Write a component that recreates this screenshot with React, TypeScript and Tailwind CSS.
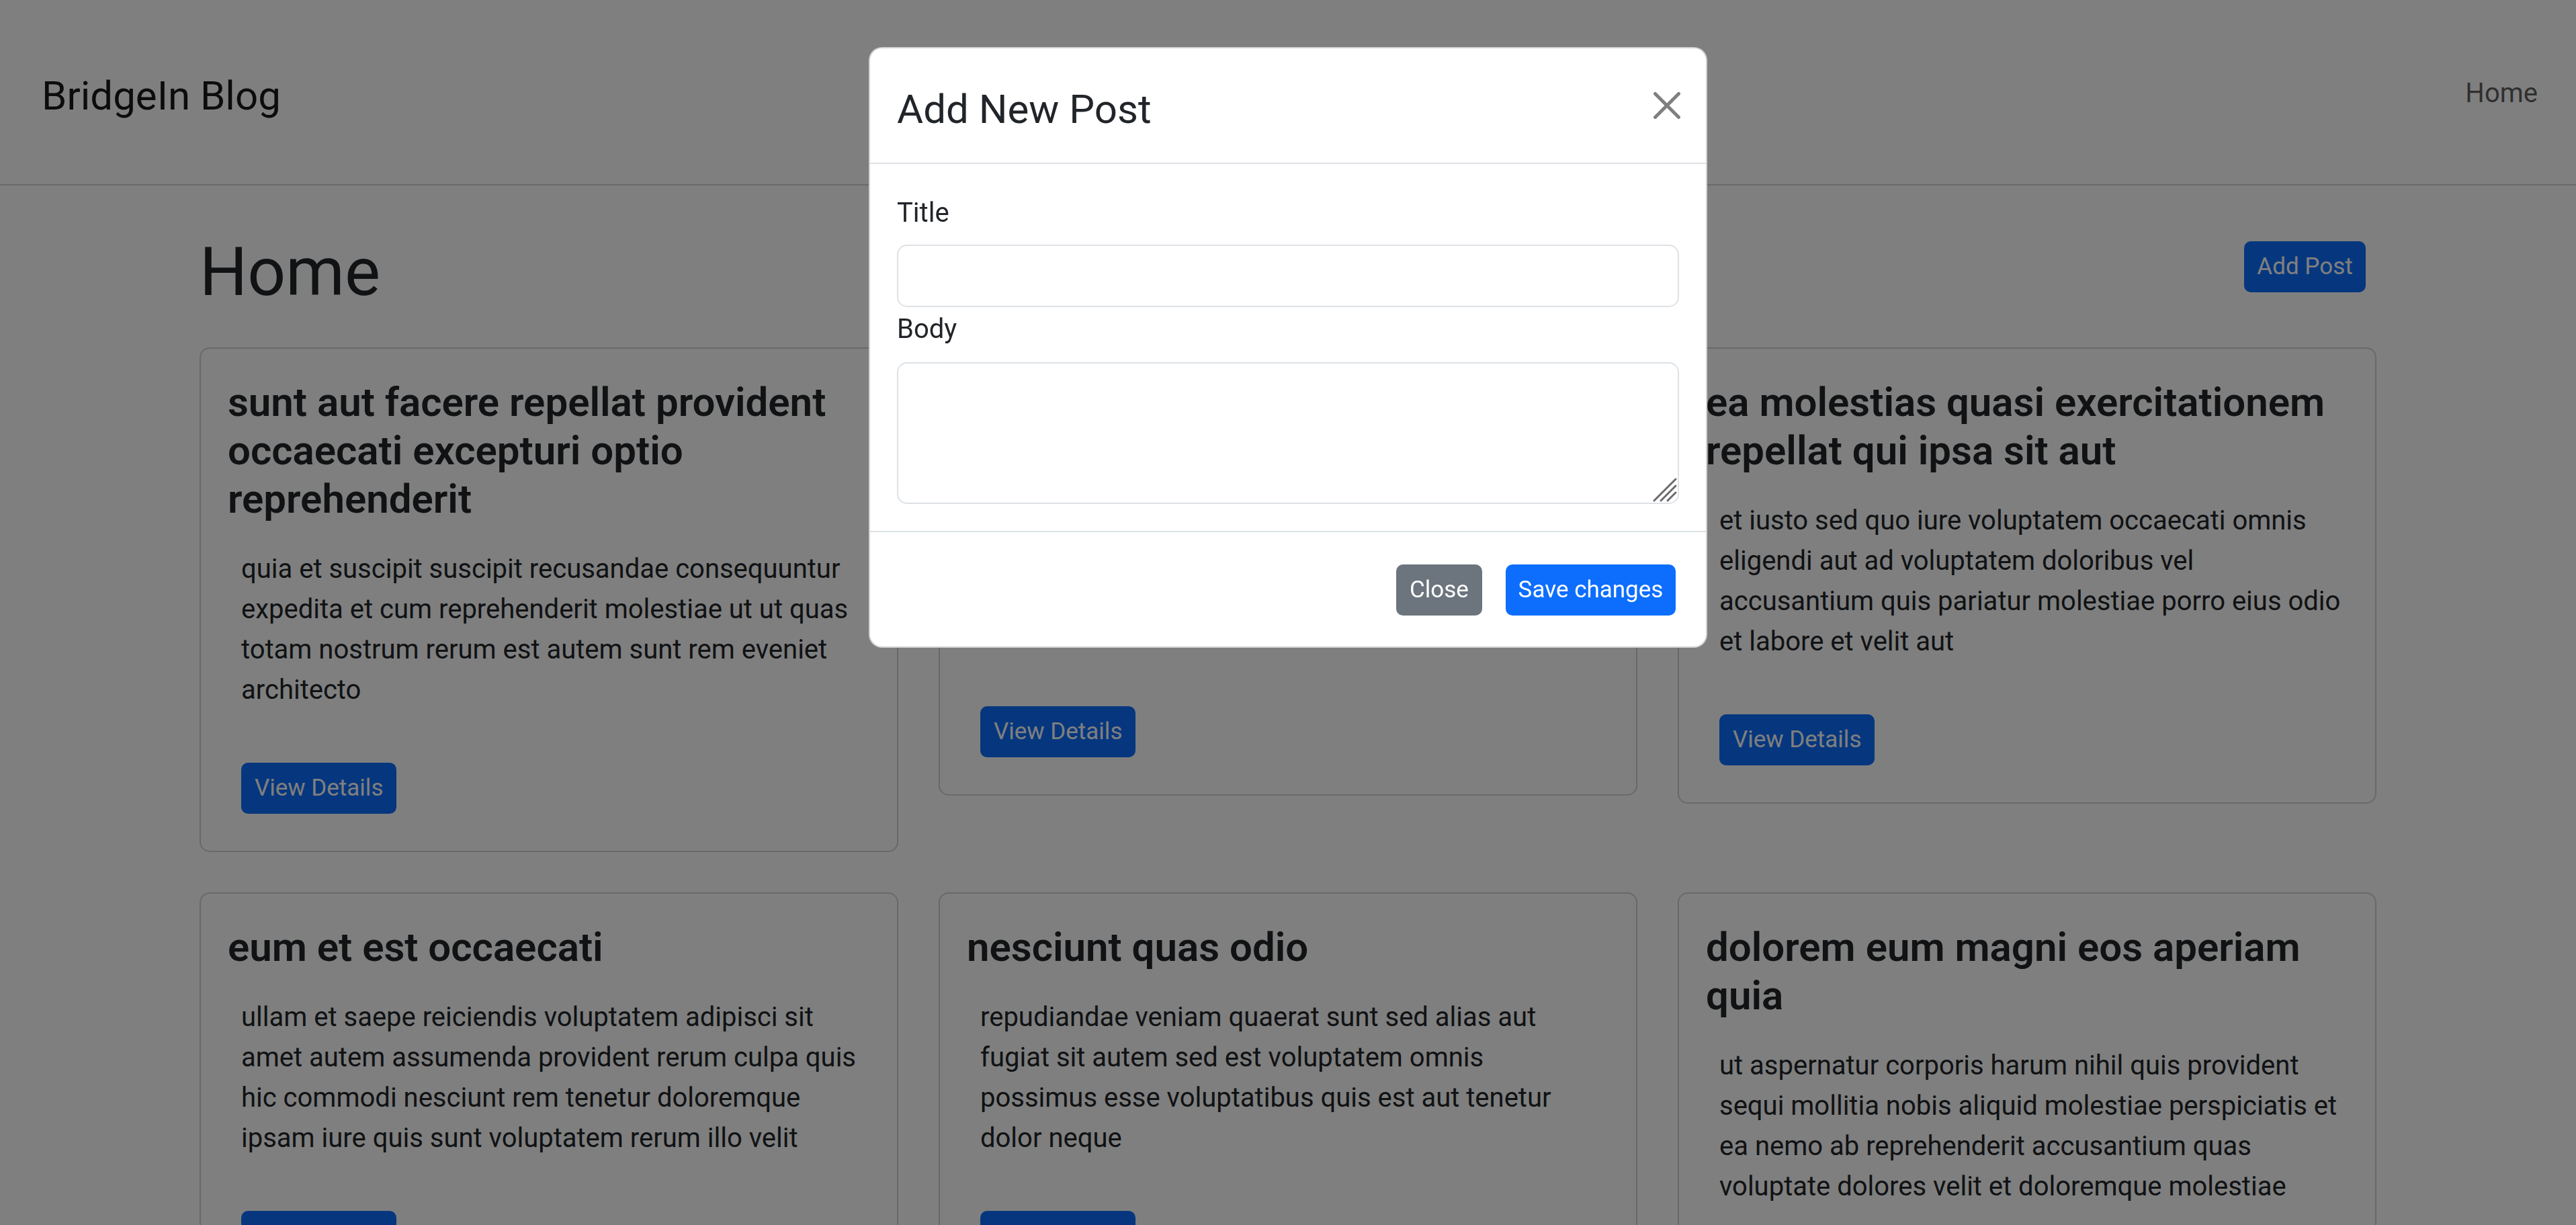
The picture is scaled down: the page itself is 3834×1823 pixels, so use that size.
import React from "react";

type Post = { title: string[]; body: string[] };

const posts: Post[] = [
  {
    title: ["sunt aut facere repellat provident", "occaecati excepturi optio", "reprehenderit"],
    body: [
      "quia et suscipit suscipit recusandae consequuntur",
      "expedita et cum reprehenderit molestiae ut ut quas",
      "totam nostrum rerum est autem sunt rem eveniet",
      "architecto",
    ],
  },
  {
    title: ["qui est esse"],
    body: [
      "est rerum tempore vitae sequi sint nihil",
      "reprehenderit dolor beatae ea dolores neque fugiat",
      "blanditiis voluptate porro vel nihil molestiae ut",
      "reiciendis qui aperiam non debitis possimus qui",
      "neque nisi nulla",
    ],
  },
  {
    title: ["ea molestias quasi exercitationem", "repellat qui ipsa sit aut"],
    body: [
      "et iusto sed quo iure voluptatem occaecati omnis",
      "eligendi aut ad voluptatem doloribus vel",
      "accusantium quis pariatur molestiae porro eius odio",
      "et labore et velit aut",
    ],
  },
  {
    title: ["eum et est occaecati"],
    body: [
      "ullam et saepe reiciendis voluptatem adipisci sit",
      "amet autem assumenda provident rerum culpa quis",
      "hic commodi nesciunt rem tenetur doloremque",
      "ipsam iure quis sunt voluptatem rerum illo velit",
    ],
  },
  {
    title: ["nesciunt quas odio"],
    body: [
      "repudiandae veniam quaerat sunt sed alias aut",
      "fugiat sit autem sed est voluptatem omnis",
      "possimus esse voluptatibus quis est aut tenetur",
      "dolor neque",
    ],
  },
  {
    title: ["dolorem eum magni eos aperiam", "quia"],
    body: [
      "ut aspernatur corporis harum nihil quis provident",
      "sequi mollitia nobis aliquid molestiae perspiciatis et",
      "ea nemo ab reprehenderit accusantium quas",
      "voluptate dolores velit et doloremque molestiae",
    ],
  },
];

function Lines({ lines }: { lines: string[] }) {
  return (
    <>
      {lines.map((l, i) => (
        <span key={i} className="block whitespace-nowrap">
          {l}
        </span>
      ))}
    </>
  );
}

function PostCard({ post }: { post: Post }) {
  return (
    <div className="rounded-[15px] border-2 border-[#d2d2d2] bg-white px-[40px] pt-[44px] pb-[38px]">
      <h4 className="mb-[18px] text-[60px] font-semibold leading-[72px] text-[#212529]">
        <Lines lines={post.title} />
      </h4>
      <p className="mb-[38px] p-[20px] text-[40px] leading-[60px] text-[#212529]">
        <Lines lines={post.body} />
      </p>
      <div className="px-[20px] pt-[20px] pb-[17px]">
        <button className="flex h-[76px] items-center justify-center rounded-[10px] bg-[#0d6efd] px-[20px] text-[35px] leading-[52px] text-white">
          View Details
        </button>
      </div>
    </div>
  );
}

function CloseIcon() {
  return (
    <svg width="40" height="40" viewBox="0 0 16 16" className="mt-[65px] -mr-[2px] shrink-0" aria-hidden="true">
      <path
        fill="#000"
        fillOpacity="0.5"
        d="M.293.293a1 1 0 0 1 1.414 0L8 6.586 14.293.293a1 1 0 1 1 1.414 1.414L9.414 8l6.293 6.293a1 1 0 0 1-1.414 1.414L8 9.414l-6.293 6.293a1 1 0 0 1-1.414-1.414L6.586 8 .293 1.707a1 1 0 0 1 0-1.414z"
      />
    </svg>
  );
}

function ResizeGrip() {
  return (
    <svg
      width="38"
      height="38"
      viewBox="0 0 38 38"
      className="pointer-events-none absolute right-[3px] bottom-[3px]"
      aria-hidden="true"
    >
      <g stroke="#6b6b6b" strokeWidth="3" strokeLinecap="round">
        <line x1="36" y1="4" x2="4" y2="36" />
        <line x1="36" y1="14" x2="14" y2="36" />
        <line x1="36" y1="24" x2="24" y2="36" />
      </g>
    </svg>
  );
}

export default function App() {
  return (
    <div className="relative h-screen overflow-hidden bg-white font-['Roboto',sans-serif] text-[#212529]">
      {/* Navbar */}
      <nav className="flex h-[276px] items-start justify-between border-b-2 border-[#d2d2d2] pl-[62px] pr-[57px]">
        <a className="mt-[98px] text-[60px] leading-[90px] text-black/90">BridgeIn Blog</a>
        <a className="mt-[109px] text-[40px] leading-[60px] text-black/65">Home</a>
      </nav>

      {/* Main */}
      <main className="mx-auto w-[3240px]">
        <div className="flex items-start justify-between pt-[69px] pr-[16px]">
          <h1 className="text-[100px] font-normal leading-[120px] text-[#212529]">Home</h1>
          <button className="mt-[14px] flex h-[76px] w-[181px] items-center justify-center rounded-[10px] bg-[#0d6efd] text-[35px] leading-[52px] text-white">
            Add Post
          </button>
        </div>
        <div className="mt-[52px] grid grid-cols-3 items-start gap-[60px]">
          {posts.map((p, i) => (
            <PostCard key={i} post={p} />
          ))}
        </div>
      </main>

      {/* Backdrop */}
      <div className="fixed inset-0 bg-black/50" />

      {/* Modal */}
      <div className="fixed inset-0 flex items-start justify-center pt-[70px]">
        <div className="w-[1248px] rounded-[20px] border-2 border-[rgba(0,0,0,0.175)] bg-white">
          <div className="flex h-[172px] items-start justify-between border-b-2 border-[#dee2e6] px-[40px]">
            <h5 className="mt-[46px] text-[60px] font-normal leading-[90px] text-[#212529]">Add New Post</h5>
            <CloseIcon />
          </div>
          <div className="px-[40px] pt-[43px] pb-[40px]">
            <label className="mb-[17px] block text-[40px] leading-[60px] text-[#212529]">Title</label>
            <input
              type="text"
              className="block h-[93px] w-full rounded-[15px] border-2 border-[#dee2e6] bg-white px-[30px] text-[40px] outline-none"
            />
            <label className="mt-[3px] mb-[19px] block text-[40px] leading-[60px] text-[#212529]">Body</label>
            <div className="relative">
              <textarea className="block h-[211px] w-full resize-none rounded-[15px] border-2 border-[#dee2e6] bg-white px-[30px] py-[15px] text-[40px] outline-none" />
              <ResizeGrip />
            </div>
          </div>
          <div className="flex items-center justify-end gap-[35px] border-t-2 border-[#dee2e6] pt-[48px] pr-[45px] pb-[46px]">
            <button className="flex h-[76px] w-[128px] items-center justify-center rounded-[10px] bg-[#6c757d] text-[35px] leading-[52px] text-white">
              Close
            </button>
            <button className="flex h-[76px] w-[253px] items-center justify-center rounded-[10px] bg-[#0d6efd] text-[35px] leading-[52px] text-white">
              Save changes
            </button>
          </div>
        </div>
      </div>
    </div>
  );
}
